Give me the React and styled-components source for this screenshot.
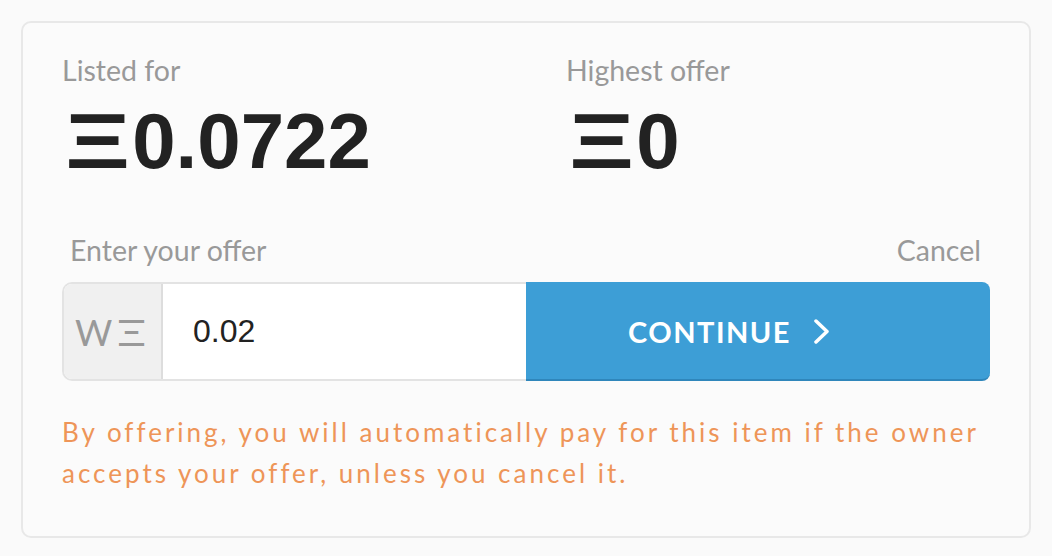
import styled, { createGlobalStyle } from "styled-components"

const GlobalStyle = createGlobalStyle`
  html, body {
    margin: 0;
    padding: 0;
    background: #fafafa;
  }
  body {
    font-family: Lato, "Noto Sans", sans-serif;
  }
`

const Page = styled.div`
  padding: 21px 21px 17px 21px;
`
const Card = styled.div`
  background: #fbfbfb;
  border: 2px solid #e8e8e8;
  border-radius: 10px;
  padding: 32px 39px 42px 39px;
`
const Stats = styled.div`
  display: grid;
  grid-template-columns: 504px 1fr;
`
const Stat = styled.div`
  display: flex;
  flex-direction: column;
`
const Label = styled.span`
  font-size: 28.5px;
  line-height: 30px;
  color: #999;
`
const Price = styled.div`
  margin-top: 18px;
  font-family: "Liberation Sans", Arial, sans-serif;
  font-weight: 700;
  font-size: 78px;
  line-height: 76px;
  color: #222;
`
const Eth = styled.span`
  display: inline-block;
  transform: scaleX(${(p) => p.$scale || 1.3});
  transform-origin: left center;
  margin-left: ${(p) => p.$left || 0}px;
  margin-right: ${(p) => p.$right || 0}px;
`
const OfferHead = styled.div`
  display: flex;
  justify-content: space-between;
  margin-top: 56px;
  padding: 0 9px 0 8px;
`
const CancelLink = styled.span`
  font-size: 28.5px;
  line-height: 30px;
  color: #999;
  cursor: pointer;
`
const OfferRow = styled.div`
  display: flex;
  margin-top: 17px;
  height: 99px;
`
const InputBox = styled.div`
  flex: 1;
  display: flex;
  border: 2px solid #e3e3e3;
  border-right: none;
  border-radius: 10px 0 0 10px;
  overflow: hidden;
  background: #fff;
`
const Prefix = styled.div`
  width: 99px;
  display: flex;
  align-items: center;
  padding-left: 11px;
  box-sizing: border-box;
  background: #f0f0f0;
  border-right: 2px solid #ddd;
  color: #999;
  font-size: 36px;
  font-weight: 400;
`
const Amount = styled.input`
  flex: 1;
  min-width: 0;
  border: none;
  outline: none;
  background: #fff;
  padding: 0 0 0 30px;
  font-family: "Liberation Sans", Arial, sans-serif;
  font-size: 32px;
  color: #222;
`
const Button = styled.button`
  width: 464px;
  display: flex;
  align-items: center;
  justify-content: center;
  gap: 22px;
  border: none;
  border-bottom: 2px solid #2f86bb;
  border-radius: 0 8px 8px 0;
  background: #3d9ed6;
  color: #fff;
  font-family: Lato, sans-serif;
  font-weight: 700;
  font-size: 29px;
  letter-spacing: 1.5px;
  cursor: pointer;
  padding: 2px 58px 0 0;
`
const Note = styled.p`
  margin: 31px 0 0 0;
  color: #ee9558;
  font-size: 26px;
  line-height: 41px;
  letter-spacing: 3px;
`

const Chevron = () => (
  <svg width="17" height="25" viewBox="0 0 17 25" fill="none">
    <path d="M3 2 L14 12.5 L3 23" stroke="#fff" strokeWidth="3.5" strokeLinecap="round" strokeLinejoin="round" />
  </svg>
)

const App = () => {
  return (
    <Page>
      <GlobalStyle />
      <Card>
        <Stats>
          <Stat>
            <Label>Listed for</Label>
            <Price>
              <Eth $left={3} $right={17}>Ξ</Eth>0.0722
            </Price>
          </Stat>
          <Stat>
            <Label>Highest offer</Label>
            <Price>
              <Eth $left={3} $right={17}>Ξ</Eth>0
            </Price>
          </Stat>
        </Stats>
        <OfferHead>
          <Label>Enter your offer</Label>
          <CancelLink>Cancel</CancelLink>
        </OfferHead>
        <OfferRow>
          <InputBox>
            <Prefix>
              W<Eth $scale={1.3} $left={5}>Ξ</Eth>
            </Prefix>
            <Amount defaultValue="0.02" />
          </InputBox>
          <Button>
            CONTINUE
            <Chevron />
          </Button>
        </OfferRow>
        <Note>
          By offering, you will automatically pay for this item if the owner accepts your offer, unless you cancel it.
        </Note>
      </Card>
    </Page>
  )
}

export default App
